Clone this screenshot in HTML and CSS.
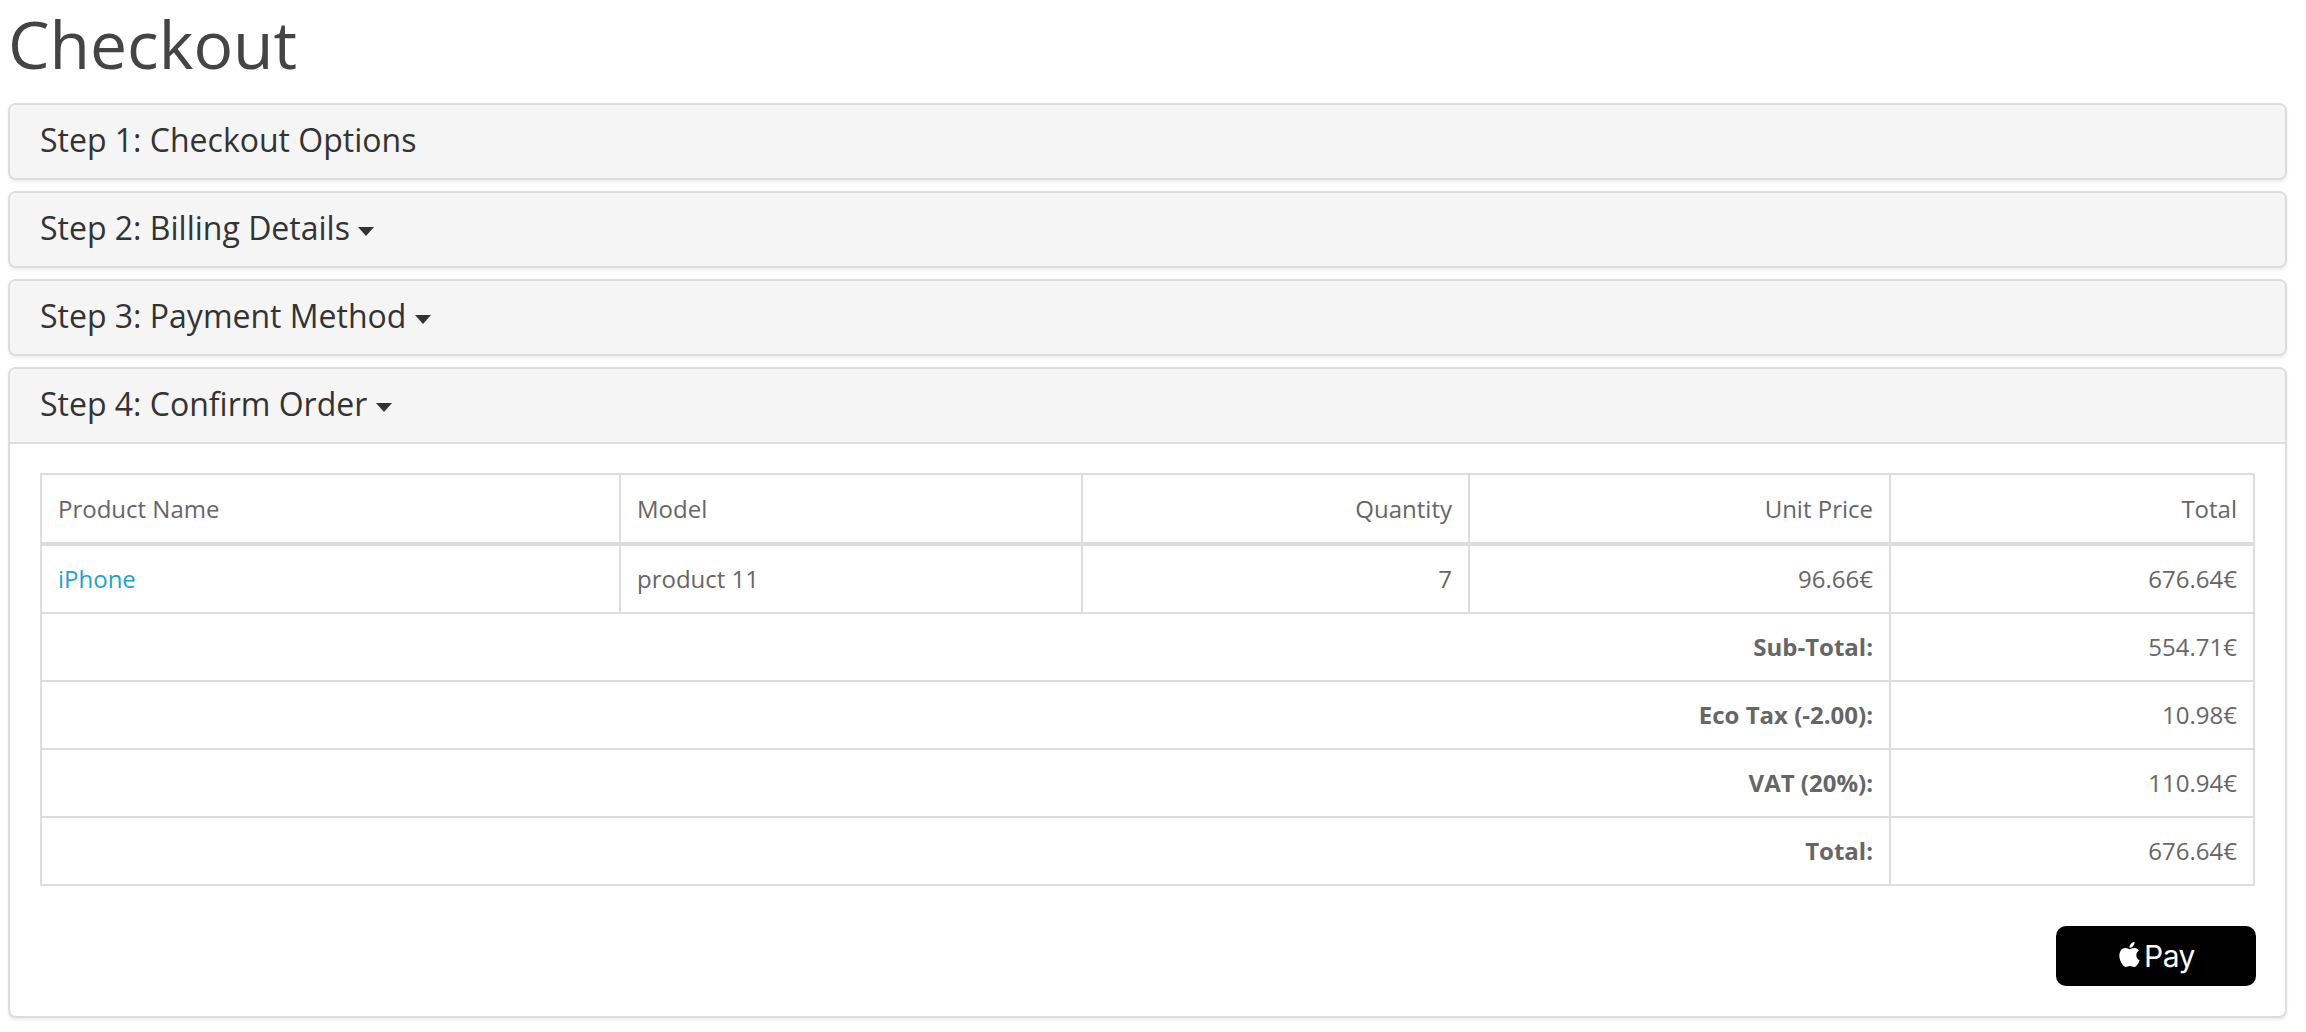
FILE: index.html
```html
<!DOCTYPE html>
<html lang="en">
<head>
<meta charset="utf-8">
<title>Checkout</title>
<link rel="stylesheet" href="styles.css">
</head>
<body>
<main class="page">
  <h1 class="page-title">Checkout</h1>
  <section class="panel">
    <div class="panel-heading"><h2 class="panel-title">Step 1: Checkout Options</h2></div>
  </section>
  <section class="panel">
    <div class="panel-heading"><h2 class="panel-title">Step 2: Billing Details <i class="caret"></i></h2></div>
  </section>
  <section class="panel">
    <div class="panel-heading"><h2 class="panel-title">Step 3: Payment Method <i class="caret"></i></h2></div>
  </section>
  <section class="panel">
    <div class="panel-heading open"><h2 class="panel-title">Step 4: Confirm Order <i class="caret"></i></h2></div>
    <div class="panel-body">
      <table class="order">
        <colgroup>
          <col class="c1"><col class="c2"><col class="c3"><col class="c4"><col class="c5">
        </colgroup>
        <thead>
          <tr>
            <td>Product Name</td>
            <td>Model</td>
            <td class="right">Quantity</td>
            <td class="right">Unit Price</td>
            <td class="right">Total</td>
          </tr>
        </thead>
        <tbody>
          <tr>
            <td><a class="link" href="#">iPhone</a></td>
            <td>product 11</td>
            <td class="right">7</td>
            <td class="right">96.66€</td>
            <td class="right">676.64€</td>
          </tr>
        </tbody>
        <tfoot>
          <tr><td colspan="4" class="right"><strong>Sub-Total:</strong></td><td class="right">554.71€</td></tr>
          <tr><td colspan="4" class="right"><strong>Eco Tax (-2.00):</strong></td><td class="right">10.98€</td></tr>
          <tr><td colspan="4" class="right"><strong>VAT (20%):</strong></td><td class="right">110.94€</td></tr>
          <tr><td colspan="4" class="right"><strong>Total:</strong></td><td class="right">676.64€</td></tr>
        </tfoot>
      </table>
      <div class="actions">
        <button class="apple-pay" type="button">
          <svg class="apple-logo" viewBox="0 0 24 24" aria-hidden="true"><path d="M12.152 6.896c-.948 0-2.415-1.078-3.96-1.04-2.04.027-3.91 1.183-4.961 3.014-2.117 3.675-.546 9.103 1.519 12.09 1.013 1.454 2.208 3.09 3.792 3.039 1.52-.065 2.09-.987 3.935-.987 1.831 0 2.35.987 3.96.948 1.637-.026 2.676-1.48 3.676-2.948 1.156-1.688 1.636-3.325 1.662-3.415-.039-.013-3.182-1.221-3.22-4.857-.026-3.04 2.48-4.494 2.597-4.559-1.429-2.09-3.623-2.324-4.39-2.376-2-.156-3.675 1.09-4.61 1.09zM15.53 3.83c.843-1.012 1.4-2.427 1.245-3.83-1.207.052-2.662.805-3.532 1.818-.78.896-1.454 2.338-1.273 3.714 1.338.104 2.715-.688 3.559-1.701"/></svg>
          <span>Pay</span>
        </button>
      </div>
    </div>
  </section>
</main>
</body>
</html>
```
FILE: styles.css
```css
* { box-sizing: border-box; }
html, body { margin: 0; padding: 0; background: #fff; }
body { font-family: "Open Sans", sans-serif; font-size: 24px; line-height: 34px; color: #666; }
.page { padding: 0 19px 0 8px; }
.page-title { margin: 0; height: 103px; padding-top: 4px; font-size: 66px; line-height: 78px; font-weight: 400; color: #444; }
.panel { border: 2px solid #ddd; border-radius: 8px; background: #fff; box-shadow: 0 2px 3px rgba(0,0,0,.08); margin-bottom: 11px; overflow: hidden; }
.panel-heading { background: #f5f5f5; padding: 17px 30px 0; height: 73px; }
.panel-heading.open { border-bottom: 2px solid #ddd; height: 75px; }
.panel-title { margin: 0; font-size: 32px; line-height: 35px; font-weight: 400; color: #333; }
.caret { display: inline-block; width: 0; height: 0; margin-left: 0; vertical-align: middle; border-top: 9px solid #333; border-left: 8.5px solid transparent; border-right: 8.5px solid transparent; }
.panel-body { padding: 29px 30px 30px; }
.order { width: 100%; table-layout: fixed; border-collapse: collapse; border: 2px solid #ddd; }
.c1 { width: 579px; } .c2 { width: 462px; } .c3 { width: 387px; } .c4 { width: 421px; } .c5 { width: auto; }
.order td { border: 2px solid #ddd; padding: 16px; }
.order thead td { border-bottom-width: 4px; padding-top: 17px; padding-bottom: 16px; }
.right { text-align: right; }
.order strong { font-weight: 700; }
.link { color: #23a1d1; text-decoration: none; }
.actions { display: flex; justify-content: flex-end; margin-top: 40px; margin-right: -1px; }
.apple-pay { display: flex; align-items: center; justify-content: center; gap: 2px; width: 200px; height: 60px; border: 0; border-radius: 10px; background: #000; color: #fff; font-family: Inter, sans-serif; font-size: 30px; letter-spacing: -0.5px; }
.apple-logo { width: 25px; height: 25px; fill: #fff; margin-top: -3px; }
```
